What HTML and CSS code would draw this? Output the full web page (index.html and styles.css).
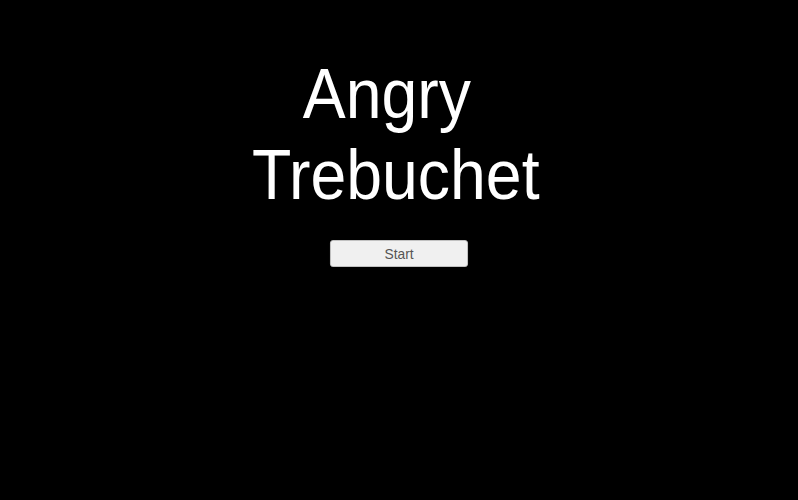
FILE: index.html
```html
<!DOCTYPE html>
<html lang="en">
<head>
    <meta charset="UTF-8">
    <meta name="viewport" content="width=device-width, initial-scale=1.0">
    <title>Angry Trebuchet</title>
    <link rel="stylesheet" href="styles.css">
</head>
<body>
    <main class="menu">
        <h1 class="title">Angry&nbsp;<br>Trebuchet</h1>
        <button class="start" type="button">Start</button>
    </main>
</body>
</html>
```

FILE: styles.css
```css
body {
    margin: 0;
    padding: 0;
    height: 100vh;
    overflow: hidden;
    background-color: #000;
    font-family: "Liberation Sans", Arial, sans-serif;
}

.menu {
    display: flex;
    flex-direction: column;
    align-items: center;
    padding-top: 54px;
    transform: scaleX(0.92);
    transform-origin: center top;
}

.title {
    margin: 0 7px 0 0;
    font-size: 70px;
    font-weight: normal;
    line-height: 81px;
    color: #fff;
    text-align: center;
}

.start {
    margin-top: 24px;
    width: 150px;
    height: 27px;
    padding: 0;
    background-color: #f0f0f0;
    border: 1px solid #c4c4c4;
    border-radius: 3px;
    color: #555;
    font-family: inherit;
    font-size: 15px;
    cursor: pointer;
}

.start:hover {
    background-color: #e6e6e6;
}
```
